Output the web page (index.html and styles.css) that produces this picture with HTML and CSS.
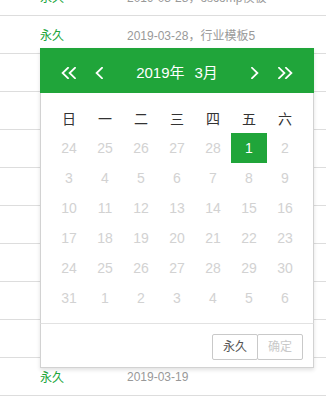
FILE: index.html
```html
<!DOCTYPE html>
<html lang="zh-CN">
<head>
<meta charset="utf-8">
<title>laydate</title>
<link rel="stylesheet" href="styles.css">
</head>
<body>
<div class="list">
  <div class="row"><span class="c1">永久</span><span class="c2">2019-03-28，oscomp模板</span></div>
  <div class="row"><span class="c1">永久</span><span class="c2">2019-03-28，行业模板5</span></div>
  <div class="row"><span class="c1">永久</span><span class="c2">2019-03-28，行业模板4</span></div>
  <div class="row"><span class="c1">永久</span><span class="c2">2019-03-28，行业模板3</span></div>
  <div class="row"><span class="c1">永久</span><span class="c2">2019-03-28，行业模板2</span></div>
  <div class="row"><span class="c1">永久</span><span class="c2">2019-03-28，行业模板1</span></div>
  <div class="row"><span class="c1">永久</span><span class="c2">2019-03-27</span></div>
  <div class="row"><span class="c1">永久</span><span class="c2">2019-03-26</span></div>
  <div class="row"><span class="c1">永久</span><span class="c2">2019-03-22</span></div>
  <div class="row"><span class="c1">永久</span><span class="c2">2019-03-20</span></div>
  <div class="row"><span class="c1">永久</span><span class="c2">2019-03-19</span></div>
</div>

<div class="laydate">
  <div class="ld-header">
    <div class="ld-nav">
      <svg class="ic-dbl" width="15" height="12" viewBox="0 0 15 12"><polyline points="7,0.8 1.6,6 7,11.2" /><polyline points="14,0.8 8.6,6 14,11.2" /></svg>
      <svg class="ic-one" width="8" height="12" viewBox="0 0 8 12"><polyline points="7,0.8 1.6,6 7,11.2" /></svg>
    </div>
    <div class="ld-title"><span>2019年</span><span>3月</span></div>
    <div class="ld-nav">
      <svg class="ic-one" width="8" height="12" viewBox="0 0 8 12"><polyline points="1,0.8 6.4,6 1,11.2" /></svg>
      <svg class="ic-dbl" width="15" height="12" viewBox="0 0 15 12"><polyline points="1,0.8 6.4,6 1,11.2" /><polyline points="8,0.8 13.4,6 8,11.2" /></svg>
    </div>
  </div>
  <div class="ld-body">
    <div class="ld-grid">
      <div class="wk">日</div><div class="wk">一</div><div class="wk">二</div><div class="wk">三</div><div class="wk">四</div><div class="wk">五</div><div class="wk">六</div>
      <div class="d">24</div><div class="d">25</div><div class="d">26</div><div class="d">27</div><div class="d">28</div><div class="d on">1</div><div class="d">2</div>
      <div class="d">3</div><div class="d">4</div><div class="d">5</div><div class="d">6</div><div class="d">7</div><div class="d">8</div><div class="d">9</div>
      <div class="d">10</div><div class="d">11</div><div class="d">12</div><div class="d">13</div><div class="d">14</div><div class="d">15</div><div class="d">16</div>
      <div class="d">17</div><div class="d">18</div><div class="d">19</div><div class="d">20</div><div class="d">21</div><div class="d">22</div><div class="d">23</div>
      <div class="d">24</div><div class="d">25</div><div class="d">26</div><div class="d">27</div><div class="d">28</div><div class="d">29</div><div class="d">30</div>
      <div class="d">31</div><div class="d">1</div><div class="d">2</div><div class="d">3</div><div class="d">4</div><div class="d">5</div><div class="d">6</div>
    </div>
  </div>
  <div class="ld-footer">
    <span class="btn">永久</span><span class="btn disabled">确定</span>
  </div>
</div>
</body>
</html>
```

FILE: styles.css
```css
html, body {
  margin: 0;
  padding: 0;
  background: #fff;
  font-family: "Liberation Sans", "Noto Sans CJK SC", sans-serif;
  overflow: hidden;
}

.list {
  margin-top: -22px;
}

.row {
  height: 37px;
  border-bottom: 1px solid #dddddd;
  display: flex;
  align-items: center;
  font-size: 12px;
}

.c1 {
  width: 87px;
  padding-left: 40px;
  color: #20a53a;
}

.c2 {
  color: #999;
}

.laydate {
  position: absolute;
  left: 40px;
  top: 48px;
  width: 274px;
  background: #fff;
  box-shadow: 0 2px 4px rgba(0, 0, 0, 0.12);
  color: #666;
  font-size: 14px;
}

.ld-header {
  height: 45px;
  box-sizing: border-box;
  padding: 10px 21px 5px 21px;
  background: #20a53a;
  display: flex;
  align-items: center;
  justify-content: space-between;
  color: #fff;
}

.ld-nav {
  display: flex;
  align-items: center;
  gap: 19px;
  height: 30px;
}

.ld-nav svg {
  display: block;
  fill: none;
  stroke: #fff;
  stroke-width: 1.8;
  stroke-linecap: square;
  stroke-linejoin: miter;
}

.ld-title {
  display: flex;
  gap: 10px;
  font-size: 15px;
  line-height: 30px;
}

.ld-body {
  border-left: 1px solid #d2d2d2;
  border-right: 1px solid #d2d2d2;
  padding: 10px;
}

.ld-grid {
  display: grid;
  grid-template-columns: repeat(7, 36px);
  grid-auto-rows: 30px;
}

.ld-grid > div {
  display: flex;
  align-items: center;
  justify-content: center;
}

.wk {
  color: #333;
}

.d {
  color: #d2d2d2;
}

.d.on {
  background: #20a53a;
  color: #fff;
}

.ld-footer {
  border: 1px solid #d2d2d2;
  border-top-color: #e2e2e2;
  height: 43px;
  box-sizing: content-box;
  padding: 10px 10px 0 0;
  box-sizing: border-box;
  height: 45px;
  display: flex;
  justify-content: flex-end;
  align-items: flex-start;
}

.btn {
  display: block;
  height: 24px;
  line-height: 24px;
  padding: 0 10px;
  border: 1px solid #c9c9c9;
  border-radius: 2px;
  font-size: 12px;
  color: #555;
  background: #fff;
}

.btn + .btn {
  margin-left: -1px;
}

.btn.disabled {
  color: #c9c9c9;
}
```
